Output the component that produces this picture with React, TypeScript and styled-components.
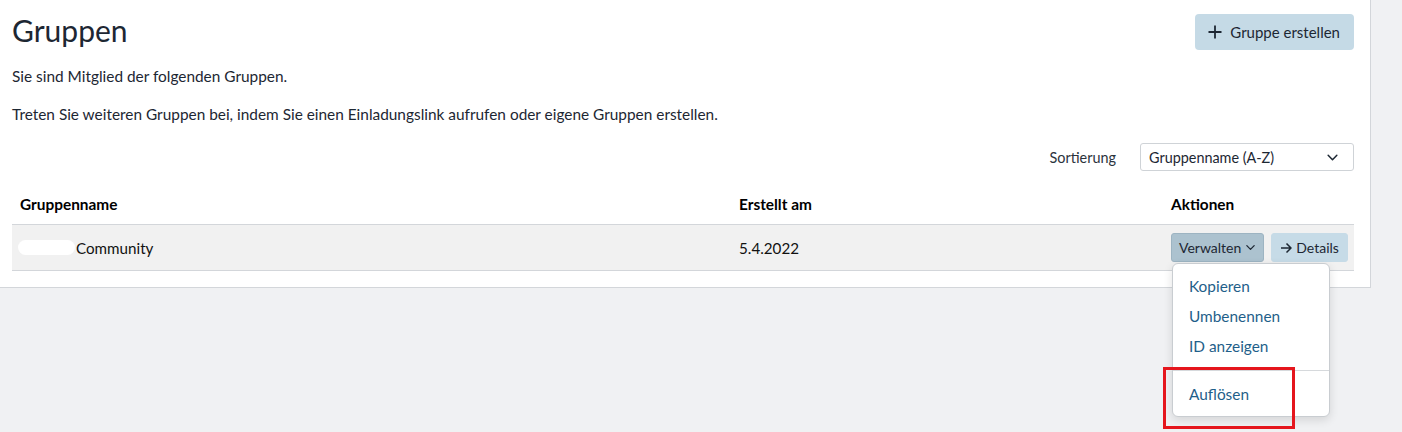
import React from "react";
import styled, { createGlobalStyle } from "styled-components";

const GlobalStyle = createGlobalStyle`
  html, body {
    margin: 0;
    padding: 0;
    background: #f0f1f3;
    font-family: "Lato", "Liberation Sans", sans-serif;
    color: #1d2733;
  }
`;

const Page = styled.main`
  min-height: 432px;
  position: relative;
`;

const Panel = styled.section`
  width: 1371px;
  box-sizing: border-box;
  background: #ffffff;
  border-right: 1px solid #d3d6da;
  border-bottom: 1px solid #d3d6da;
  padding: 12px 16px 16px 12px;
`;

const Header = styled.div`
  display: flex;
  justify-content: space-between;
  align-items: flex-start;
`;

const Title = styled.h1`
  margin: 0;
  font-size: 30px;
  font-weight: 400;
  line-height: 36px;
  color: #1d2733;
`;

const PrimaryButton = styled.button`
  display: flex;
  align-items: center;
  gap: 8px;
  height: 36px;
  margin-top: 2px;
  padding: 0 14px 0 13px;
  background: #c5dae6;
  border: none;
  border-radius: 4px;
  font-family: inherit;
  font-size: 15px;
  color: #1d2733;
`;

const Text = styled.p`
  margin: 0;
  font-size: 15.4px;
  line-height: 20px;
`;

const FirstText = styled(Text)`
  margin-top: 16px;
`;

const SecondText = styled(Text)`
  margin-top: 18px;
`;

const SortRow = styled.div`
  display: flex;
  justify-content: flex-end;
  align-items: center;
  gap: 24px;
  margin-top: 19px;
`;

const SortLabel = styled.span`
  font-size: 14.4px;
  color: #2b333c;
`;

const Select = styled.div`
  width: 214px;
  height: 28px;
  box-sizing: border-box;
  display: flex;
  align-items: center;
  justify-content: space-between;
  padding: 0 14px 0 8px;
  border: 1px solid #cfd3d7;
  border-radius: 3px;
  font-size: 14.4px;
`;

const Table = styled.div`
  margin-top: 12px;
  width: 1342px;
`;

const Row = styled.div<{ $body?: boolean }>`
  display: grid;
  grid-template-columns: 719px 432px 1fr;
  align-items: center;
  height: ${(p) => (p.$body ? "45px" : "41px")};
  background: ${(p) => (p.$body ? "#f1f1f1" : "transparent")};
  border-top: ${(p) => (p.$body ? "1px solid #d3d6da" : "none")};
  border-bottom: ${(p) => (p.$body ? "1px solid #d3d6da" : "none")};
`;

const HeadCell = styled.div`
  padding-left: 8px;
  font-size: 15.4px;
  font-weight: 700;
  color: #000;
`;

const Cell = styled.div`
  display: flex;
  align-items: center;
  padding-left: 8px;
  font-size: 15.2px;
  color: #111;
`;

const Blur = styled.span`
  display: inline-block;
  width: 57px;
  height: 15px;
  border-radius: 8px;
  background: #ffffff;
  margin-left: -2px;
  margin-right: 1px;
`;

const Actions = styled.div`
  display: flex;
  gap: 7px;
  padding-left: 8px;
`;

const MenuWrap = styled.div`
  position: relative;
`;

const SmallButton = styled.button<{ $dark?: boolean }>`
  display: flex;
  align-items: center;
  gap: 4px;
  height: 29px;
  padding: 0 ${(p) => (p.$dark ? "7px" : "8px")};
  background: ${(p) => (p.$dark ? "#acc2cf" : "#c6dbe7")};
  border: 1px solid ${(p) => (p.$dark ? "#9db4c2" : "#c6dbe7")};
  border-radius: 3px;
  font-family: inherit;
  font-size: 14px;
  color: #1d2733;
`;

const Menu = styled.div`
  position: absolute;
  top: 30px;
  left: 1px;
  width: 158px;
  box-sizing: border-box;
  padding: 7px 0;
  background: #ffffff;
  border: 1px solid #c9cdd1;
  border-radius: 6px;
  box-shadow: 0 3px 10px rgba(0, 0, 0, 0.12);
  z-index: 5;
`;

const MenuItem = styled.div`
  height: 30px;
  line-height: 30px;
  padding-left: 16px;
  font-size: 15.4px;
  color: #1f5f8a;
`;

const Divider = styled.div`
  height: 1px;
  background: #d6d9dc;
  margin: 9px 0 8px;
`;

const Highlight = styled.div`
  position: absolute;
  left: -8px;
  top: 134px;
  width: 132px;
  height: 62px;
  box-sizing: border-box;
  border: 3px solid #e5161d;
  pointer-events: none;
  z-index: 6;
`;

const Chevron = ({ size = 12 }: { size?: number }) => (
  <svg width={size} height={size} viewBox="0 0 12 12" fill="none">
    <path d="M2 4l4 4 4-4" stroke="#1d2733" strokeWidth="1.4" strokeLinecap="round" strokeLinejoin="round" />
  </svg>
);

const Plus = () => (
  <svg width="14" height="14" viewBox="0 0 14 14">
    <path d="M7 0.5v13M0.5 7h13" stroke="#1d2733" strokeWidth="1.8" />
  </svg>
);

const Arrow = () => (
  <svg width="12" height="12" viewBox="0 0 12 12" fill="none">
    <path d="M1 6h10M6.5 1.5L11 6l-4.5 4.5" stroke="#1d2733" strokeWidth="1.5" strokeLinejoin="round" />
  </svg>
);

export default function App() {
  return (
    <Page>
      <GlobalStyle />
      <Panel>
        <Header>
          <Title>Gruppen</Title>
          <PrimaryButton>
            <Plus />
            Gruppe erstellen
          </PrimaryButton>
        </Header>
        <FirstText>Sie sind Mitglied der folgenden Gruppen.</FirstText>
        <SecondText>
          Treten Sie weiteren Gruppen bei, indem Sie einen Einladungslink aufrufen oder eigene Gruppen erstellen.
        </SecondText>
        <SortRow>
          <SortLabel>Sortierung</SortLabel>
          <Select>
            Gruppenname (A-Z)
            <Chevron size={13} />
          </Select>
        </SortRow>
        <Table>
          <Row>
            <HeadCell>Gruppenname</HeadCell>
            <HeadCell>Erstellt am</HeadCell>
            <HeadCell>Aktionen</HeadCell>
          </Row>
          <Row $body>
            <Cell>
              <Blur />
              Community
            </Cell>
            <Cell>5.4.2022</Cell>
            <Actions>
              <MenuWrap>
                <SmallButton $dark>
                  Verwalten
                  <Chevron size={11} />
                </SmallButton>
                <Menu>
                  <MenuItem>Kopieren</MenuItem>
                  <MenuItem>Umbenennen</MenuItem>
                  <MenuItem>ID anzeigen</MenuItem>
                  <Divider />
                  <MenuItem>Auflösen</MenuItem>
                </Menu>
                <Highlight />
              </MenuWrap>
              <SmallButton>
                <Arrow />
                Details
              </SmallButton>
            </Actions>
          </Row>
        </Table>
      </Panel>
    </Page>
  );
}
